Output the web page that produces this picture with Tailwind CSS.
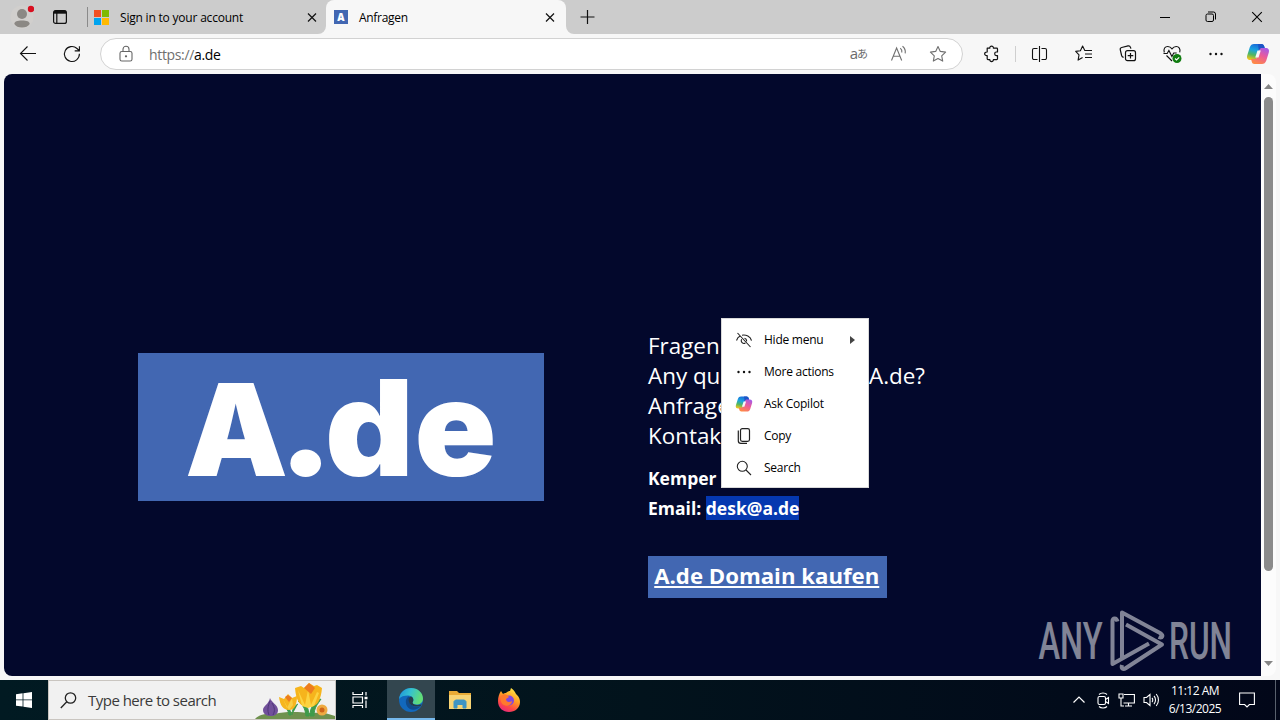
<!DOCTYPE html>
<html lang="en">
<head>
    <meta charset="UTF-8">
    <meta name="viewport" content="width=device-width, initial-scale=1.0">
    <title>Anfragen</title>
    <script src="https://cdn.jsdelivr.net/npm/@tailwindcss/browser@4"></script>
    <style>
        body {
            font-family: "Open Sans", "Noto Sans", "Noto Sans CJK JP", sans-serif;
        }
    </style>
</head>
<body class="w-[1280px] h-[720px] overflow-hidden bg-[#f7f7f7] text-black">
    <!-- Shared icons -->
    <svg class="absolute w-0 h-0">
        <defs>
            <linearGradient id="cp-a" x1="0.6" y1="0" x2="0.3" y2="1">
                <stop offset="0" stop-color="#1b66d8" /><stop offset=".4" stop-color="#19a4e0" /><stop offset=".7" stop-color="#52b760" /><stop offset="1" stop-color="#f0c51c" />
            </linearGradient>
            <linearGradient id="cp-b" x1="0.8" y1="0" x2="0.3" y2="1">
                <stop offset="0" stop-color="#a35be8" /><stop offset=".45" stop-color="#ea5a9c" /><stop offset="1" stop-color="#ff8a45" />
            </linearGradient>
            <symbol id="copilot" viewBox="0 0 24 24">
                <path fill="url(#cp-a)" d="M8 2h7.5c1.600 0 2.300 1 2.700 2.300L19 7h-3c-2 0-2.800 1-3.300 2.600L10.600 16c-.5 1.500-1.300 2-2.600 2H4.500C1.500 18 .5 16 1.200 13.500l2.500-8C4.500 3 6 2 8 2z" />
                <path fill="#1c55c6" d="M12 2h3.500c1.600 0 2.300 1 2.700 2.300L19 7h-3c-1.700 0-2.600.7-3.100 2z" />
                <path fill="url(#cp-b)" d="M16 22H8.500c-1.600 0-2.300-1-2.700-2.300L5 17h3c2 0 2.800-1 3.300-2.600L13.400 8c.5-1.500 1.300-2 2.600-2h3.500c3 0 4 2 3.300 4.500l-2.500 8C19.500 21 18 22 16 22z" />
                <path fill="#f7f7f7" d="M11.500 8.500h3.300l-2.300 7H9.200z" />
            </symbol>
            <linearGradient id="edge-a" x1="0" y1="0" x2="1" y2="0.3">
                <stop offset="0" stop-color="#1c8fdb" /><stop offset=".5" stop-color="#35c1d0" /><stop offset="1" stop-color="#62dd76" />
            </linearGradient>
            <linearGradient id="fox" x1="0.8" y1="0" x2="0.3" y2="1">
                <stop offset="0" stop-color="#fff04a" /><stop offset=".45" stop-color="#ff9a24" /><stop offset=".75" stop-color="#ff4a44" /><stop offset="1" stop-color="#e8287c" />
            </linearGradient>
        </defs>
    </svg>

    <div class="flex flex-col h-full">
        <!-- Tab strip -->
        <header class="flex h-[34px] shrink-0 bg-[#cccccc] text-xs">
            <div class="flex items-center w-[87px] shrink-0">
                <svg class="ml-[10px] w-6 h-6" viewBox="0 0 24 24">
                    <circle cx="12" cy="12" r="11.500" fill="#d1cfcd" />
                    <circle cx="12" cy="9" r="5" fill="#8b8884" />
                    <path d="M4.300 19c0-2.500 3-3.500 7.700-3.500s7.700 1 7.700 3.500c-1.500 2.500-4.200 3.500-7.700 3.500S5.800 21.500 4.300 19z" fill="#8b8884" />
                    <circle cx="21" cy="4" r="3.200" fill="#d80f20" />
                </svg>
                <svg class="ml-[18px] w-4 h-4" viewBox="0 0 16 16" fill="none" stroke="#111" stroke-width="1.200">
                    <rect x="1.600" y="1.600" width="12.800" height="12.800" rx="2" />
                    <path d="M2 3.200h12" stroke-width="3" />
                    <path d="M4.800 4v10" />
                </svg>
            </div>
            <div class="flex items-center w-[240px]">
                <div class="w-px h-5 bg-[#8a8a8a]"></div>
                <div class="ml-[6px] grid grid-cols-2 gap-px w-[15px] h-[15px]">
                    <div class="bg-[#f25022]"></div><div class="bg-[#7fba00]"></div>
                    <div class="bg-[#00a4ef]"></div><div class="bg-[#ffb900]"></div>
                </div>
                <span class="ml-[11px] pt-px tracking-[-0.2px] whitespace-nowrap">Sign in to your account</span>
                <svg class="ml-auto mr-[10px] w-[10px] h-[10px]" viewBox="0 0 10 10" stroke="#111" stroke-width="1.200"><path d="M1 1.500l8 8M9 1.500l-8 8" /></svg>
            </div>
            <div class="relative flex items-center w-[240px] -ml-px bg-[#f7f7f7] rounded-t-lg">
                <svg class="absolute -left-2 bottom-0 w-2 h-2" viewBox="0 0 8 8"><path d="M8 0v8H0a8 8 0 008-8z" fill="#f7f7f7" /></svg>
                <svg class="absolute -right-2 bottom-0 w-2 h-2" viewBox="0 0 8 8"><path d="M0 0v8h8a8 8 0 01-8-8z" fill="#f7f7f7" /></svg>
                <div class="ml-2 w-[14px] h-[14px] bg-[#4267b2] text-white text-[10px] leading-[14px] font-extrabold text-center">A</div>
                <span class="ml-[11px] pt-px tracking-[-0.3px]">Anfragen</span>
                <svg class="ml-auto mr-[11px] w-[10px] h-[10px]" viewBox="0 0 10 10" stroke="#111" stroke-width="1.200"><path d="M1 1.500l8 8M9 1.500l-8 8" /></svg>
            </div>
            <svg class="self-center ml-[14px] w-4 h-4" viewBox="0 0 16 16" stroke="#111" stroke-width="1.200"><path d="M7.500 1v14M.5 8h14" /></svg>
            <div class="ml-auto flex items-center">
                <svg class="w-[46px] h-5" viewBox="0 0 46 20" stroke="#000"><path d="M18 10.500h10" /></svg>
                <svg class="w-[46px] h-5" viewBox="0 0 46 20" fill="none" stroke="#000"><rect x="18" y="7" width="7.500" height="7.500" rx="1.500" /><path d="M20 5h5.500a2 2 0 012 2v5.500" /></svg>
                <svg class="w-[46px] h-5" viewBox="0 0 46 20" stroke="#000" stroke-width="1.100"><path d="M18.200 5.200l9.600 9.600M27.800 5.200l-9.600 9.600" /></svg>
            </div>
        </header>

        <!-- Toolbar -->
        <nav class="flex items-center h-10 shrink-0 bg-[#f7f7f7]">
            <svg class="ml-[18px] w-5 h-5" viewBox="0 0 20 20" fill="none" stroke="#111" stroke-width="1.100"><path d="M18 9.500H2.500M9.500 2.500l-7 7 7 7" /></svg>
            <svg class="ml-6 w-5 h-5" viewBox="0 0 20 20" fill="none" stroke="#111" stroke-width="1.100"><path d="M17.400 9.800A7.500 7.500 0 1115 4.500l2.200 2.200M17.400 2.200v4.700h-4.700" /></svg>
            <div class="ml-[18px] flex items-center w-[863px] h-8 rounded-full bg-white border border-[#d2d2d2]">
                <svg class="ml-[17px] w-4 h-[18px]" viewBox="0 0 16 18" fill="none" stroke="#666" stroke-width="1.100"><rect x="2" y="6.500" width="12" height="9.500" rx="1.800" /><path d="M5 6.500V4.200a3 3 0 016 0v2.300" /><circle cx="8" cy="11.300" r=".6" fill="#666" /></svg>
                <span class="ml-[15px] pt-px text-sm tracking-[-0.35px] text-[#6f6f6f]">https://<span class="text-black">a.de</span></span>
                <span class="ml-auto flex items-baseline text-[#6b6b6b] text-[15px] leading-5">a<span class="text-[11px] -ml-px relative -top-px">あ</span></span>
                <svg class="ml-[22px] w-[18px] h-[18px]" viewBox="0 0 18 18" fill="none" stroke="#707070" stroke-width="1.100"><path d="M1.500 15.500L6.600 3l5.100 12.500M3.400 11.300h6.500M10.300 3.200a4.500 4.500 0 011.500 4.300M12.500 1.300a7.500 7.500 0 012.700 7" /></svg>
                <svg class="ml-[21px] mr-[15px] w-[18px] h-[18px]" viewBox="0 0 18 18" fill="none" stroke="#707070" stroke-width="1.100" stroke-linejoin="round"><path d="M9 1.500l2.300 4.900 5.300.7-3.900 3.700 1 5.300L9 13.500l-4.700 2.600 1-5.300L1.400 7.100l5.300-.7z" /></svg>
            </div>
            <!-- Extensions -->
            <svg class="ml-5 w-[18px] h-[18px]" viewBox="0 0 18 18" fill="none" stroke="#111" stroke-width="1.200" stroke-linejoin="round"><path d="M4.200 3.200h2.600c-.4-2.700 4-2.700 3.600 0h3.300c.5 0 .8.300.8.800v3h-1.300c-2 0-2 3.600 0 3.600h1.300v3.200c0 .5-.3.800-.8.800h-3.300c.3 2.600-3.900 2.600-3.600 0H5c-.5 0-.8-.3-.8-.8v-3.200c-3.400.3-3.400-3.900 0-3.600z" /></svg>
            <div class="ml-[14px] w-px h-4 bg-[#cfcfcf]"></div>
            <svg class="ml-[14px] w-5 h-5" viewBox="0 0 20 20" fill="none" stroke="#111" stroke-width="1.100"><path d="M7.500 4.500H4A1.500 1.500 0 002.500 6v8A1.500 1.500 0 004 15.500h3.500M11.500 4.500H15A1.500 1.500 0 0116.500 6v8a1.500 1.500 0 01-1.500 1.500h-3.500M9.500 2v16" /></svg>
            <svg class="ml-6 w-5 h-5" viewBox="0 0 20 20" fill="none" stroke="#111" stroke-width="1.100" stroke-linejoin="round"><path d="M12 6.500h-1.200L8.600 2 6.400 6.700l-4.700.7L5 10.800l-.9 5.300 4.500-2.500M12 6.500h6M11 10h7M11 13.500h7" /></svg>
            <svg class="ml-6 w-5 h-5" viewBox="0 0 20 20" fill="none" stroke="#111" stroke-width="1.200"><rect x="7.500" y="6.700" width="10" height="10" rx="2" /><path d="M12.500 9v5.500M9.700 11.700h5.600M5.600 13.300c-1-.2-1.700-.7-2-1.800L2.300 5.800c-.3-1.200.4-2 1.400-2.300L10 1.900c1.200-.3 2.100.3 2.600 1.700l.3 1" /></svg>
            <svg class="ml-6 w-5 h-5" viewBox="0 0 20 20" fill="none" stroke="#111" stroke-width="1.100"><path d="M2.300 8.500C1.200 4.700 3 2.500 5.800 2.500c2 0 3.200 1 4.200 2.400 1-1.400 2.200-2.400 4.200-2.400 2.700 0 4.500 2.300 3.500 5.800M4.500 11.500L10 17M1.500 9.500h3.700l1.700-3 3 6 1.800-3.500h3" /><circle cx="15" cy="14.500" r="4.500" fill="#107c10" stroke="none" /><path d="M13 14.500l1.500 1.500 2.700-2.700" stroke="#fff" /></svg>
            <svg class="ml-6 w-5 h-5" viewBox="0 0 20 20" fill="#111"><circle cx="4.500" cy="10" r="1.200" /><circle cx="10" cy="10" r="1.200" /><circle cx="15.500" cy="10" r="1.200" /></svg>
            <svg class="ml-5 w-6 h-6"><use href="#copilot" /></svg>
        </nav>

        <!-- Page viewport -->
        <div class="flex h-[602px] shrink-0 mx-1 rounded-lg overflow-hidden bg-[#fcfcfc]">
            <main class="relative w-[1257px] bg-[#03082c] text-white">
                <div class="flex pl-[134px]">
                    <div class="mt-[279px] w-[406px] h-[148px] bg-[#4267b2]">
                        <svg class="w-full h-full overflow-visible" viewBox="0 0 406 148" fill="#fff" font-family="Inter" font-weight="900" font-size="128">
                            <text x="47" y="123" textLength="103" lengthAdjust="spacingAndGlyphs">A</text>
                            <ellipse cx="167.700" cy="110.300" rx="15.300" ry="13.700" />
                            <text x="187" y="123" font-size="133" textLength="89" lengthAdjust="spacingAndGlyphs">d</text>
                            <text x="276.500" y="123" font-size="133" textLength="82" lengthAdjust="spacingAndGlyphs">e</text>
                        </svg>
                    </div>
                    <section class="ml-[104px] mt-[256px] whitespace-nowrap">
                        <p class="pt-[0.5px] text-[22.400px] leading-[30.300px]">Fragen<br><span class="inline-block w-[221px]">Any qu</span>A.de?<br>Anfrage<br>Kontak</p>
                        <p class="mt-[11px] text-[17.500px] leading-[30px] font-bold">Kemper<br>Email: <span class="inline-block leading-6 bg-[#0538b0]">desk@a.de</span></p>
                        <a class="mt-[33px] flex items-center justify-center w-[238.500px] h-[42.500px] bg-[#4267b2] text-[22.200px] font-bold underline underline-offset-2 decoration-2 pb-[3px] pr-px">A.de Domain kaufen</a>
                    </section>
                </div>

                <!-- Selection mini menu -->
                <div class="absolute left-[717px] top-[244px] w-[148px] h-[170px] py-[5px] bg-white border border-[#d9d9d9] text-black text-xs tracking-[-0.25px]">
                    <div class="flex items-center h-8 pl-[14px]">
                        <svg class="w-4 h-4 mr-3" viewBox="0 0 16 16" fill="none" stroke="#222" stroke-width="1.100"><path d="M1.500 1l13 14M.5 8.500C1.200 6.300 2.400 4.800 4.200 4M6 3.200C10 2.500 14.500 4.500 15.500 8.500M8.500 6.200a2.700 2.700 0 012 3.100M5.700 7.300a2.700 2.700 0 003.700 3.700" /></svg>
                        <span>Hide menu</span>
                        <svg class="ml-auto mr-[13px] w-[5px] h-2" viewBox="0 0 5 8" fill="#444"><path d="M0 0l5 4-5 4z" /></svg>
                    </div>
                    <div class="flex items-center h-8 pl-[14px]">
                        <svg class="w-4 h-4 mr-3" viewBox="0 0 16 16" fill="#111"><circle cx="2.500" cy="8" r="1.200" /><circle cx="8" cy="8" r="1.200" /><circle cx="13.500" cy="8" r="1.200" /></svg>
                        <span>More actions</span>
                    </div>
                    <div class="flex items-center h-8 pl-[14px]">
                        <svg class="w-[18px] h-[18px] -ml-px mr-[11px]"><use href="#copilot" /></svg>
                        <span>Ask Copilot</span>
                    </div>
                    <div class="flex items-center h-8 pl-[14px]">
                        <svg class="w-4 h-4 mr-3" viewBox="0 0 16 16" fill="none" stroke="#222" stroke-width="1.200"><rect x="4.500" y=".6" width="9" height="12.800" rx="1.800" /><path d="M2.300 2.500v10.200a2.600 2.600 0 002.600 2.600H11" /></svg>
                        <span>Copy</span>
                    </div>
                    <div class="flex items-center h-8 pl-[14px]">
                        <svg class="w-4 h-4 mr-3" viewBox="0 0 16 16" fill="none" stroke="#222" stroke-width="1.100"><circle cx="6.300" cy="6.300" r="5" /><path d="M10 10l5 5" /></svg>
                        <span>Search</span>
                    </div>
                </div>

                <!-- ANY.RUN watermark -->
                <svg class="absolute left-[1026px] top-[530px] w-[210px] h-[72px] opacity-50 overflow-visible" viewBox="0 0 210 72" fill="#fff" font-family="Roboto" font-size="52" font-weight="500">
                    <text x="8.500" y="55" textLength="64" lengthAdjust="spacingAndGlyphs">ANY</text>
                    <text x="139" y="55" textLength="63" lengthAdjust="spacingAndGlyphs">RUN</text>
                    <path fill="none" stroke="#fff" stroke-width="4" stroke-linejoin="round" d="M87.500 17.500c-1-4-5-4-5-.5V60L119 39.500M92 53.500V8.500l38 20.500c4 2.500 2.500 5.500-1.500 4M96 20.500l36 20L96 64c-3 2-5 .5-4-3" />
                </svg>
            </main>

            <!-- Scrollbar -->
            <div class="flex flex-col items-center flex-1 py-[10px]">
                <svg class="w-[9px] h-[5px]" viewBox="0 0 9 5" fill="#858585"><path d="M0 5l4.500-5L9 5z" /></svg>
                <div class="mt-2 w-[9px] h-[474px] rounded-full bg-[#8b8b8b]"></div>
                <svg class="mt-auto w-[9px] h-[5px]" viewBox="0 0 9 5" fill="#858585"><path d="M0 0l4.500 5L9 0z" /></svg>
            </div>
        </div>

        <!-- Taskbar -->
        <footer class="mt-auto flex h-10 shrink-0 bg-linear-to-r from-[#011a22] via-[#02131c] to-[#020719] text-white">
            <div class="flex items-center justify-center w-12">
                <svg class="w-4 h-4" viewBox="0 0 16 16" fill="#fff"><path d="M0 2.300L6.600 1.300V7.500H0zM7.400 1.200L16 0v7.500H7.400zM0 8.300h6.600v6.300L0 13.700zM7.400 8.300H16V16l-8.600-1.200z" /></svg>
            </div>
            <div class="flex items-center w-72 bg-[#f1f1f1] border border-[#c9c5c0] text-[#3a3a3a]">
                <svg class="ml-[11px] w-[17px] h-[17px]" viewBox="0 0 17 17" fill="none" stroke="#222" stroke-width="1.300"><circle cx="10.500" cy="6" r="5.200" /><path d="M6.800 9.700L.8 16" /></svg>
                <span class="ml-[11px] text-[15px] tracking-[-0.52px] whitespace-nowrap">Type here to search</span>
                <svg class="ml-auto w-[80px] h-[38px]" viewBox="0 0 80 38">
                    <path d="M0 38c4-5 12-6 20-5 10-3 25-2 35-1 10-1 18 0 25 3v3z" fill="#6f914e" />
                    <path d="M34 34c-1-5-3-9-7-12 6 1 8 5 9 12zM37 34c0-5 2-9 6-11M51 35c-1-8-3-11-8-15 8 2 11 7 11 15zM55 35c0-9 4-14 11-17-3 5-7 8-7 17z" fill="#3f9b4b" stroke="#3f9b4b" />
                    <path d="M15 17c1 4 8 7 8 12 0 4-3 6-7 6s-8-2-8-6 6-6 7-12z" fill="#71509a" /><path d="M15 20c-2 5-3 9-1 14M17 22c3 5 3 8 1 12" stroke="#4e3679" fill="none" />
                    <path d="M24 16l5 2 4-5 4 4 5-2c0 8-2 14-8 14s-9-5-10-13z" fill="#f7b51d" /><path d="M28 18l4 9 5-10 1 7-4 5z" fill="#f8cf45" /><path d="M30 16l3-2 4 3-3 4z" fill="#ec7c20" />
                    <path d="M40 7l6-2 3 2 5-5 5 3 3-1 5 3c-1 11-4 19-13 19S41 20 40 7z" fill="#f6b41c" /><path d="M43 9l7 15 3-15 3 15 6-13 2 1-5 13-6 2-6-2z" fill="#fcd341" /><path d="M49 7l5-5 6 5-4 6z" fill="#ed7c1f" />
                    <circle cx="67" cy="29" r="5.500" fill="#efaa42" /><circle cx="67" cy="29" r="2.500" fill="#cf6419" />
                </svg>
            </div>
            <div class="flex items-center justify-center w-[51px] pr-[3px]">
                <svg class="w-4 h-4" viewBox="0 0 16 16" fill="none" stroke="#fff" stroke-width="1.200"><path d="M1 0v2.500h9.500V0M1 16v-2.500h9.500V16M1 5h9.500v6H1zM14 0v3.500M14 8.500V16" /><path d="M12.500 6h3" stroke-width="2.500" /></svg>
            </div>
            <div class="flex items-center justify-center w-12 bg-[#33464f] border-b-2 border-[#76b9ed]">
                <svg class="w-6 h-6 mt-px" viewBox="0 0 24 24">
                    <circle cx="12" cy="12" r="12" fill="#1268bd" />
                    <path d="M0 11C1 4 6 0 12 0c7 0 12 5 12 10.500 0 4-3 6-6.500 6-3 0-4.500-1-4-2 2-3 .5-7-4.500-7-4 0-7.500 1-9 3.500z" fill="url(#edge-a)" />
                    <path d="M9.500 8.500C5.500 11 6 18 11 21c3.500 2 8 0 10.500-2.500C17 20 12 18 10.500 14.500c-.7-2 0-4 1-4.800z" fill="#114a8b" />
                    <path d="M13.500 14.500c1.500-2 1-5-1.500-6-2 .5-3 3-2 5.500 1 3 5 5.500 11.700 4.300l1-2c-3 1.500-9 .8-9.200-1.800z" fill="#263c4a" />
                </svg>
            </div>
            <div class="flex items-center justify-center w-[49px]">
                <svg class="w-[22px] h-[20px]" viewBox="0 0 22 20"><path d="M0 1h8l2 2h12v16H0z" fill="#e9ab36" /><path d="M0 5h22v14H0z" fill="#f8d474" /><path d="M5 18v-6.500L6.500 10h9l1.500 1.500V18h-3v-3.500H8V18z" fill="#3f94c4" stroke="#3f94c4" /></svg>
            </div>
            <div class="flex items-center justify-center w-[50px]">
                <svg class="w-6 h-6" viewBox="0 0 24 24">
                    <path d="M4 3l2 3c1-1 2-1 3-1 1-1 2-2 4-2l1-3c3 2 4 4 5 6l1 1c2 2 3 4 3 7 0 6-5 10-11 10S1 20 1 13c0-4 1-7 3-10z" fill="url(#fox)" />
                    <circle cx="12" cy="12.500" r="5" fill="#8147df" /><path d="M4 8c2-2 4-2 6-1l2 2-3 2c0 3 3 4 6 2 0 4-5 6-8 4-3-1-4-5-3-9z" fill="#ff792d" />
                </svg>
            </div>
            <div class="ml-auto flex items-center">
                <svg class="w-3 h-3" viewBox="0 0 12 12" fill="none" stroke="#fff" stroke-width="1.200"><path d="M.5 8.500L6 3l5.500 5.500" /></svg>
                <svg class="ml-3 w-[13px] h-[17px]" viewBox="0 0 13 17" fill="none" stroke="#fff" stroke-width="1.100"><rect x="1" y="4.500" width="7.500" height="8" rx="1.500" /><path d="M8.500 7.500l3-2v6l-3-2M2 2.500c2-2 6-2 8 0M2 14.500c2 2 6 2 8 0" /></svg>
                <svg class="ml-[8px] w-[17px] h-4" viewBox="0 0 17 16" fill="none" stroke="#fff" stroke-width="1.100"><path d="M6 2.500h10.400v8.500H5.500M10.500 11v3M7 14h7M1 2h4v4H1zM3 6v8h3" /></svg>
                <svg class="ml-[8px] w-[17px] h-4" viewBox="0 0 17 16" fill="none" stroke="#fff" stroke-width="1.100"><path d="M1 5.500h2.500L7 2.500v11l-3.500-3H1zM9 6c1 1 1 3 0 4M11 4c2 2 2 6 0 8M13.200 2c3 3.500 3 8.500 0 12" /></svg>
                <div class="ml-[8px] w-[54px] text-xs leading-[18px] text-center tracking-[-0.500px] whitespace-nowrap">11:12 AM<br>6/13/2025</div>
                <svg class="ml-[17px] w-4 h-4" viewBox="0 0 16 16" fill="none" stroke="#fff" stroke-width="1.100"><path d="M.6 1h14.800v11.500h-5L8 15l-2.400-2.500h-5z" /></svg>
                <div class="ml-5 w-px h-10 bg-[#58606d]"></div>
                <div class="w-1"></div>
            </div>
        </footer>
    </div>
</body>
</html>
